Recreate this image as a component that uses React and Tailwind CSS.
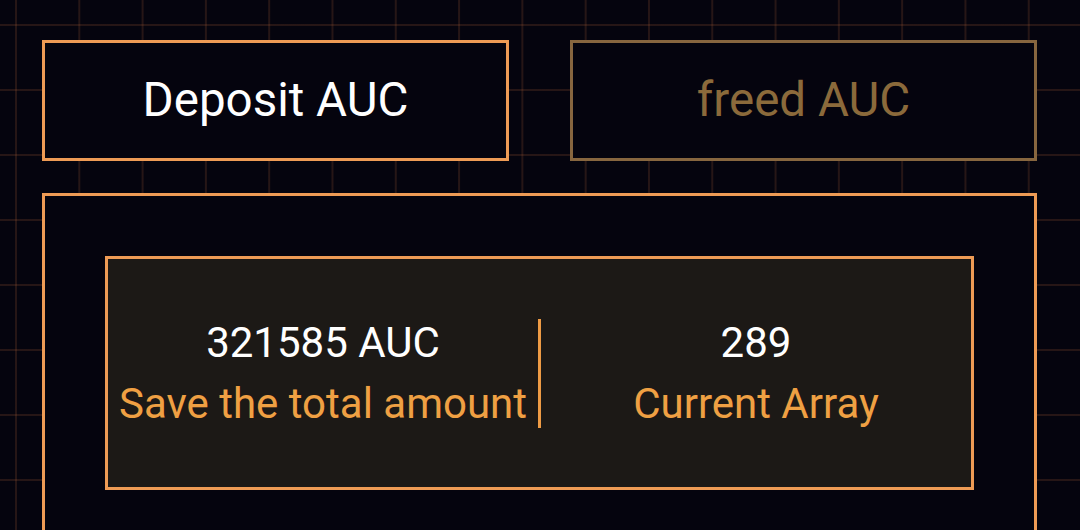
import React from "react";

function Stat({ value, label }) {
    return (
        <div className="flex-1 flex flex-col items-center justify-center">
            <div className="text-white text-[42px] leading-[61px]">{value}</div>
            <div className="text-[#efa043] text-[42px] leading-[61px]">{label}</div>
        </div>
    );
}

export default function App() {
    return (
        <div
            className="min-h-screen w-full bg-[#05040e] overflow-hidden pl-[42px] pr-[43px] pt-[40px] [background-image:linear-gradient(to_right,rgba(190,105,60,0.18)_2px,transparent_2px),linear-gradient(to_bottom,rgba(190,105,60,0.18)_2px,transparent_2px)] [background-size:63.3px_65px] [background-position:15px_24px]"
            style={{ fontFamily: "Roboto, 'Noto Sans', sans-serif" }}
        >
            {/* tabs */}
            <div className="flex gap-[61px]">
                <button className="flex-1 h-[121px] border-[3px] border-[#ee9b55] bg-[#05040e] text-white text-[47.5px] flex items-center justify-center">
                    Deposit AUC
                </button>
                <button className="flex-1 h-[121px] border-[3px] border-[#87663f] bg-[#05040e] text-[#8b6a3b] text-[47.5px] flex items-center justify-center">
                    freed AUC
                </button>
            </div>

            {/* panel */}
            <div className="mt-[32px] border-[3px] border-[#ee9b55] bg-[#05040e] px-[60px] pt-[60px] pb-[60px]">
                <div className="h-[234px] border-[3px] border-[#ee9b55] bg-[#1c1916] flex items-center">
                    <Stat value="321585 AUC" label="Save the total amount" />
                    <div className="w-[3px] h-[109px] bg-[#ee9b45]" />
                    <Stat value="289" label="Current Array" />
                </div>
            </div>
        </div>
    );
}
